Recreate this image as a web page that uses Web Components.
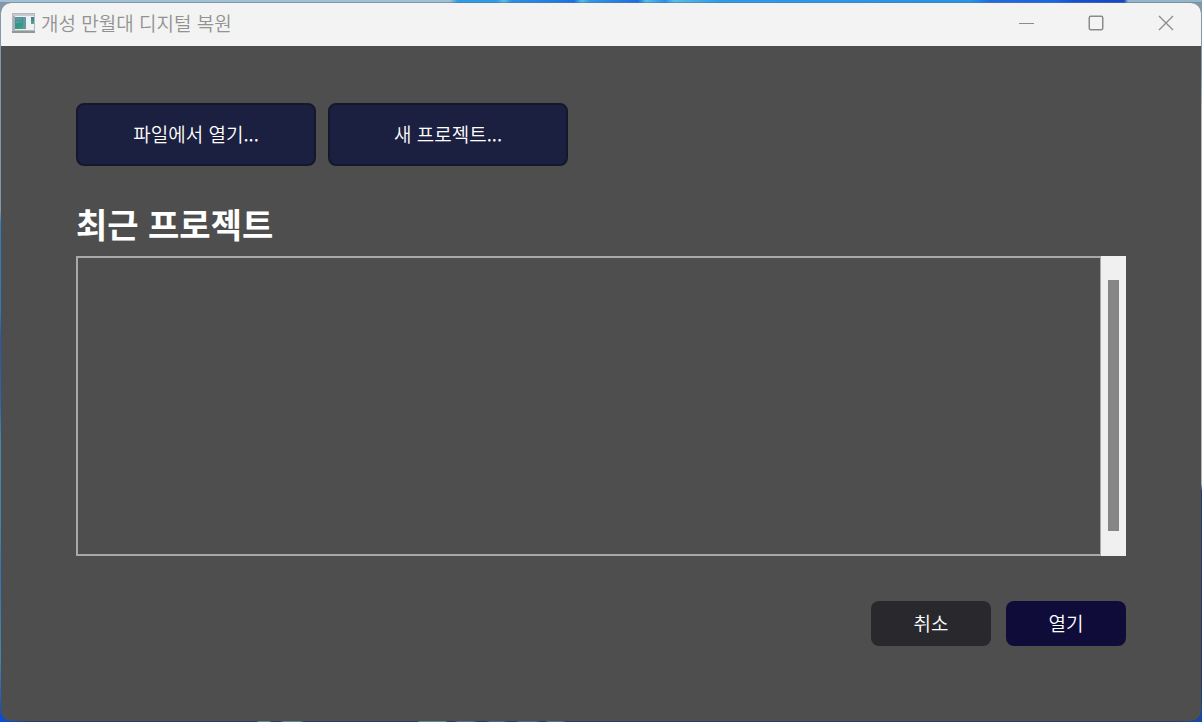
<!DOCTYPE html>
<html lang="ko">
<head>
<meta charset="utf-8">
<title>개성 만월대 디지털 복원</title>
<style>
html, body { height: 100%; margin: 0; }
body { font-family: "Noto Sans CJK KR", "Noto Sans", sans-serif; background: #1a5fd0; }
</style>
</head>
<body>
<launcher-desktop>
  <launcher-window>
    <title-bar slot="title">개성 만월대 디지털 복원</title-bar>
    <action-button slot="actions" kind="large">파일에서 열기...</action-button>
    <action-button slot="actions" kind="large">새 프로젝트...</action-button>
    <recent-list>최근 프로젝트</recent-list>
    <action-button slot="footer" kind="cancel">취소</action-button>
    <action-button slot="footer" kind="open">열기</action-button>
  </launcher-window>
</launcher-desktop>
<script>
const define = (name, html) => customElements.define(name, class extends HTMLElement {
  constructor() {
    super();
    this.attachShadow({ mode: "open" }).innerHTML = html;
  }
});

define("launcher-desktop", `
<style>
:host {
  display: flex; box-sizing: border-box; min-height: 100%; padding: 3px 1px 1px;
  background:
    linear-gradient(transparent 2px, rgb(100 115 130 / 55%) 2px 3px, transparent 3px) top / 100% 3px no-repeat,
    linear-gradient(90deg, #9fc0d5 0 450px, #2c9be8 458px 496px, #57bde8 504px, #2b8fe6 512px, #1b72e4 574px, #57bde8 582px, #2c98e8 590px, #1f6be0 638px, #57bde8 646px, #2b8fe6 665px, #57bde8 674px, #2e9aea 720px, #2495ea 970px, #1f6be0 990px, #1766e4 1056px, #1550d2 1074px, #1347c6 1124px, #94b4cb 1128px) top / 100% 3px no-repeat,
    linear-gradient(90deg, #0b4ed0 0 10px, #2a3967 30px 256px, #5b8792 259px 269px, #2a3967 272px 280px, #5b8792 284px 300px, #2a3967 304px 417px, #5b8792 420px 445px, #2a3967 448px 454px, #4f7392 458px 473px, #2a3967 477px 486px, #426aa0 490px 503px, #2a3967 507px 516px, #426aa0 519px 536px, #2a3967 540px 545px, #4f7392 548px 562px, #2a3967 566px 97%, #174a9d) bottom / 100% 1px no-repeat,
    linear-gradient(#8498a8 0 29%, #2f80be 31%, #2d7dbc 43%, #2559b0 47%, #2668b4 56%, #438bac 61%, #4088ac 72%, #3177b8 80%, #408aaa 91%, #2864bd 96%, #0b4ed0 99%) left / 12px 100% no-repeat,
    linear-gradient(#8399a8 0 10%, #aeb4b8 15% 67%, #243d78 68%, #233866 94%, #1547a4 99%) right / 12px 100% no-repeat;
}
</style><slot></slot>`);

define("launcher-window", `
<style>
:host { display: flex; flex-direction: column; flex: 1; border-radius: 10px; overflow: hidden; background: #4e4e4e; }
main { flex: 1; padding: 57px 75px 60px; display: flex; flex-direction: column; }
nav { display: flex; gap: 12px; }
::slotted(recent-list) { margin-top: 36px; flex: 1; }
footer { display: flex; justify-content: flex-end; gap: 15px; margin: 45px 0 15px; }
</style>
<slot name="title"></slot>
<main>
  <nav><slot name="actions"></slot></nav>
  <slot></slot>
  <footer><slot name="footer"></slot></footer>
</main>`);

define("title-bar", `
<style>
:host { display: block; background: #f3f3f3; color: #929292; }
header { display: flex; align-items: center; height: 40px; padding: 0 0 3px 11px; }
.icon { flex: none; margin-right: 6px; }
h1 { flex: 1; margin: 0; font-size: 19px; line-height: 24px; font-weight: 350; white-space: nowrap; }
button { width: 70px; height: 40px; padding: 0; border: 0; background: none; color: #8b8b8b; display: grid; place-items: center; }
button svg { fill: none; stroke: currentColor; }
</style>
<header>
  <svg class="icon" width="23" height="20" viewBox="0 0 23 20" aria-hidden="true">
    <defs>
      <linearGradient id="g" x2="1" y2="1"><stop stop-color="#5d8fa9"/><stop offset=".5" stop-color="#359587"/><stop offset="1" stop-color="#48ae62"/></linearGradient>
      <linearGradient id="r" y2="1" x2="0"><stop stop-color="#3d70a8"/><stop offset="1" stop-color="#55b079"/></linearGradient>
    </defs>
    <path d="M0 0H23V20H0Z" fill="#b4b8bc"/>
    <path d="M1 1H22V3H1Z" fill="#c6c9ce"/>
    <path d="M1 3H22V17H1Z" fill="#eef1f2"/>
    <path d="M1 3H3V17H1Z" fill="#a8adb7"/>
    <path d="M3 4H14V16H3Z" fill="url(#g)"/>
    <path d="M11 4H14V16H11Z" fill="#6397a8"/>
    <path d="M4 6H10M4 9H10" stroke="#6ba4b3"/>
    <path d="M19 4H22V11H19Z" fill="url(#r)"/>
    <path d="M0 18H23V20H0Z" fill="#91979c"/>
  </svg>
  <h1><slot></slot></h1>
  <button aria-label="최소화"><svg width="16" height="16"><path d="M1 8.5H16"/></svg></button>
  <button aria-label="최대화"><svg width="16" height="16" stroke-width="1.5"><rect x="1.25" y="1.25" width="13.5" height="13.5" rx="1.5"/></svg></button>
  <button aria-label="닫기"><svg width="16" height="16" stroke-width="1.3"><path d="M1 1L15 15M15 1L1 15"/></svg></button>
</header>`);

define("action-button", `
<style>
:host { display: block; }
button { box-sizing: border-box; width: 120px; height: 45px; padding: 0 0 2px; border: 0; border-radius: 8px; color: #fff; font: 350 19px/24px "Noto Sans CJK KR", "Noto Sans", sans-serif; }
:host([kind="large"]) button { width: 240px; height: 63px; border: 2px solid #15182c; background: #1c2040; }
:host([kind="cancel"]) button { background: #29282d; }
:host([kind="open"]) button { background: #100c3a; }
</style>
<button type="button"><slot></slot></button>`);

define("recent-list", `
<style>
:host { display: flex; flex-direction: column; }
h2 { margin: 0; font-size: 34px; line-height: 44px; font-weight: 700; color: #fff; padding-bottom: 10px; }
.list { flex: 1; min-height: 200px; display: flex; }
.items { flex: 1; border: 2px solid #a9a9a9; border-right-width: 1px; }
.bar { box-sizing: border-box; width: 25px; padding: 24px 7px 25px; background: #f0f0f0; display: flex; }
.thumb { width: 11px; background: #868686; }
</style>
<h2 id="h"><slot></slot></h2>
<div class="list">
  <div class="items" role="listbox" aria-labelledby="h" tabindex="0"></div>
  <div class="bar"><div class="thumb"></div></div>
</div>`);
</script>
</body>
</html>
